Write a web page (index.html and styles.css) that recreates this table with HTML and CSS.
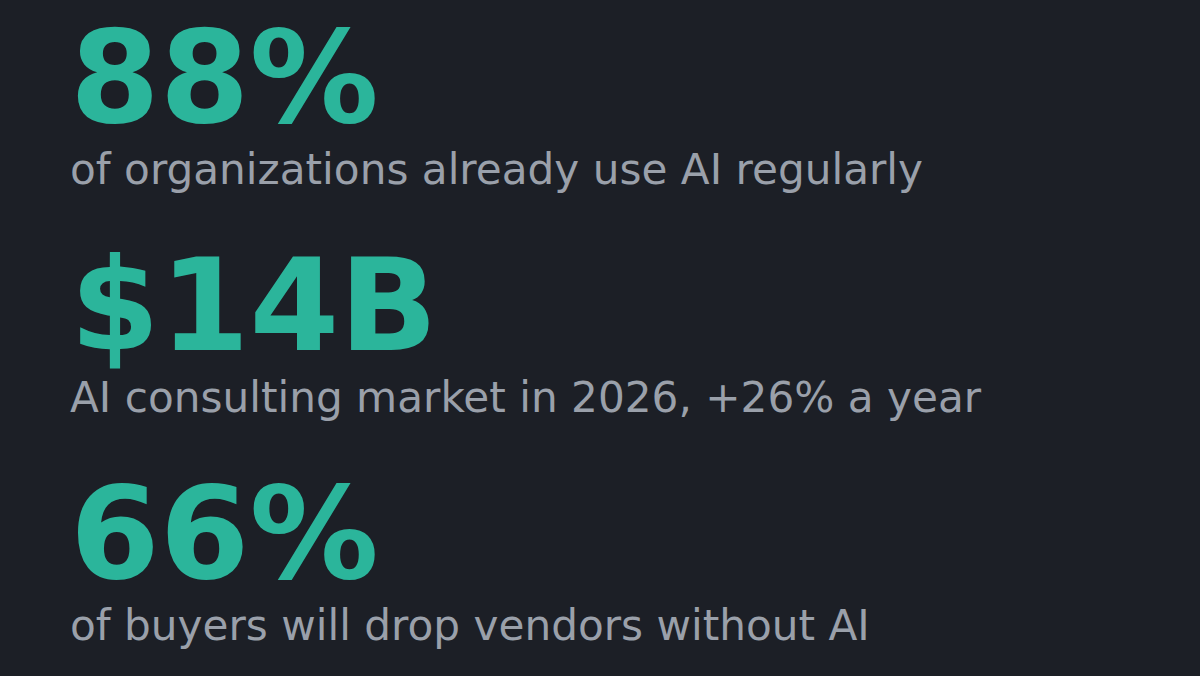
FILE: index.html
```html
<!DOCTYPE html>
<html lang="en">
<head>
<meta charset="utf-8">
<link rel="stylesheet" href="styles.css">
</head>
<body>
<main class="stats">
  <section class="stat">
    <div class="stat-value">88%</div>
    <div class="stat-label">of organizations already use AI regularly</div>
  </section>
  <section class="stat">
    <div class="stat-value">$14B</div>
    <div class="stat-label">AI consulting market in 2026, +26% a year</div>
  </section>
  <section class="stat">
    <div class="stat-value">66%</div>
    <div class="stat-label">of buyers will drop vendors without AI</div>
  </section>
</main>
</body>
</html>
```

FILE: styles.css
```css
html, body {
  margin: 0;
  padding: 0;
  background: #1c1f26;
  height: 100%;
  overflow: hidden;
}
body {
  font-family: "DejaVu Sans", sans-serif;
}
.stats {
  display: flex;
  flex-direction: column;
  gap: 43px;
  padding: 13px 0 0 70px;
}
.stat {
  display: flex;
  flex-direction: column;
}
.stat-value {
  font-size: 129px;
  font-weight: 700;
  line-height: 129px;
  color: #2bb59b;
}
.stat-label {
  font-size: 42.2px;
  line-height: 56px;
  color: #9aa0aa;
}
```
